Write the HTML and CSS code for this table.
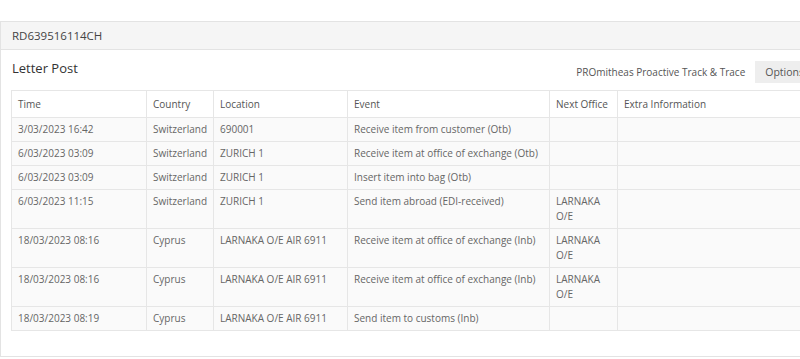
FILE: index.html
```html
<!DOCTYPE html>
<html>
<head>
<meta charset="utf-8">
<link rel="stylesheet" href="styles.css">
</head>
<body>
<div class="panel">
  <div class="panel-heading">RD639516114CH</div>
  <div class="panel-body">
    <div class="toolbar">
      <div class="title">Letter Post</div>
      <div class="spacer"></div>
      <div class="brand">PROmitheas Proactive Track &amp; Trace</div>
      <div class="btn">Options</div>
    </div>
    <table class="events">
      <colgroup>
        <col class="c-time"><col class="c-country"><col class="c-loc"><col class="c-event"><col class="c-next"><col class="c-extra">
      </colgroup>
      <thead>
        <tr><th>Time</th><th>Country</th><th>Location</th><th>Event</th><th>Next Office</th><th>Extra Information</th></tr>
      </thead>
      <tbody>
        <tr><td>3/03/2023 16:42</td><td>Switzerland</td><td>690001</td><td>Receive item from customer (Otb)</td><td></td><td></td></tr>
        <tr><td>6/03/2023 03:09</td><td>Switzerland</td><td>ZURICH 1</td><td>Receive item at office of exchange (Otb)</td><td></td><td></td></tr>
        <tr><td>6/03/2023 03:09</td><td>Switzerland</td><td>ZURICH 1</td><td>Insert item into bag (Otb)</td><td></td><td></td></tr>
        <tr><td>6/03/2023 11:15</td><td>Switzerland</td><td>ZURICH 1</td><td>Send item abroad (EDI-received)</td><td>LARNAKA O/E</td><td></td></tr>
        <tr><td>18/03/2023 08:16</td><td>Cyprus</td><td>LARNAKA O/E AIR 6911</td><td>Receive item at office of exchange (Inb)</td><td>LARNAKA O/E</td><td></td></tr>
        <tr><td>18/03/2023 08:16</td><td>Cyprus</td><td>LARNAKA O/E AIR 6911</td><td>Receive item at office of exchange (Inb)</td><td>LARNAKA O/E</td><td></td></tr>
        <tr><td>18/03/2023 08:19</td><td>Cyprus</td><td>LARNAKA O/E AIR 6911</td><td>Send item to customs (Inb)</td><td></td><td></td></tr>
      </tbody>
    </table>
  </div>
</div>
</body>
</html>
```
FILE: styles.css
```css
html, body {
  margin: 0;
  padding: 0;
  overflow: hidden;
  background: #fff;
}
body {
  font-family: "Open Sans", "Liberation Sans", sans-serif;
  color: #555;
  padding-top: 21px;
}
.panel {
  width: 825px;
  border: 1px solid #e3e3e3;
  border-right: none;
  box-sizing: border-box;
}
.panel-heading {
  background: #f5f5f5;
  border-bottom: 1px solid #e3e3e3;
  height: 27px;
  line-height: 27px;
  padding-left: 11px;
  font-size: 11.5px;
  color: #444;
}
.panel-body {
  padding: 11px 11px 25px 10px;
}
.toolbar {
  display: flex;
  align-items: center;
  height: 22px;
  margin-bottom: 7px;
}
.title {
  font-size: 13px;
  color: #333;
  margin-top: -8px;
  margin-left: 1px;
}
.spacer { flex: 1; }
.brand {
  font-size: 10px;
  color: #555;
  margin-right: 10px;
}
.btn {
  background: #eeeeee;
  height: 22px;
  line-height: 22px;
  padding: 0 10px;
  font-size: 10.5px;
  color: #555;
}
.events {
  width: 100%;
  border-collapse: collapse;
  table-layout: fixed;
  font-size: 10px;
  color: #666;
}
.c-time { width: 135px; }
.c-country { width: 67px; }
.c-loc { width: 134px; }
.c-event { width: 202px; }
.c-next { width: 68px; }
.events th, .events td {
  border: 1px solid #e6e6e6;
  text-align: left;
  vertical-align: top;
  line-height: 15px;
}
.events th {
  font-weight: normal;
  padding: 6px 6px 5px;
  color: #555;
  background: #fff;
}
.events td {
  padding: 4px 6px 4px;
  background: #fafafa;
}
```
